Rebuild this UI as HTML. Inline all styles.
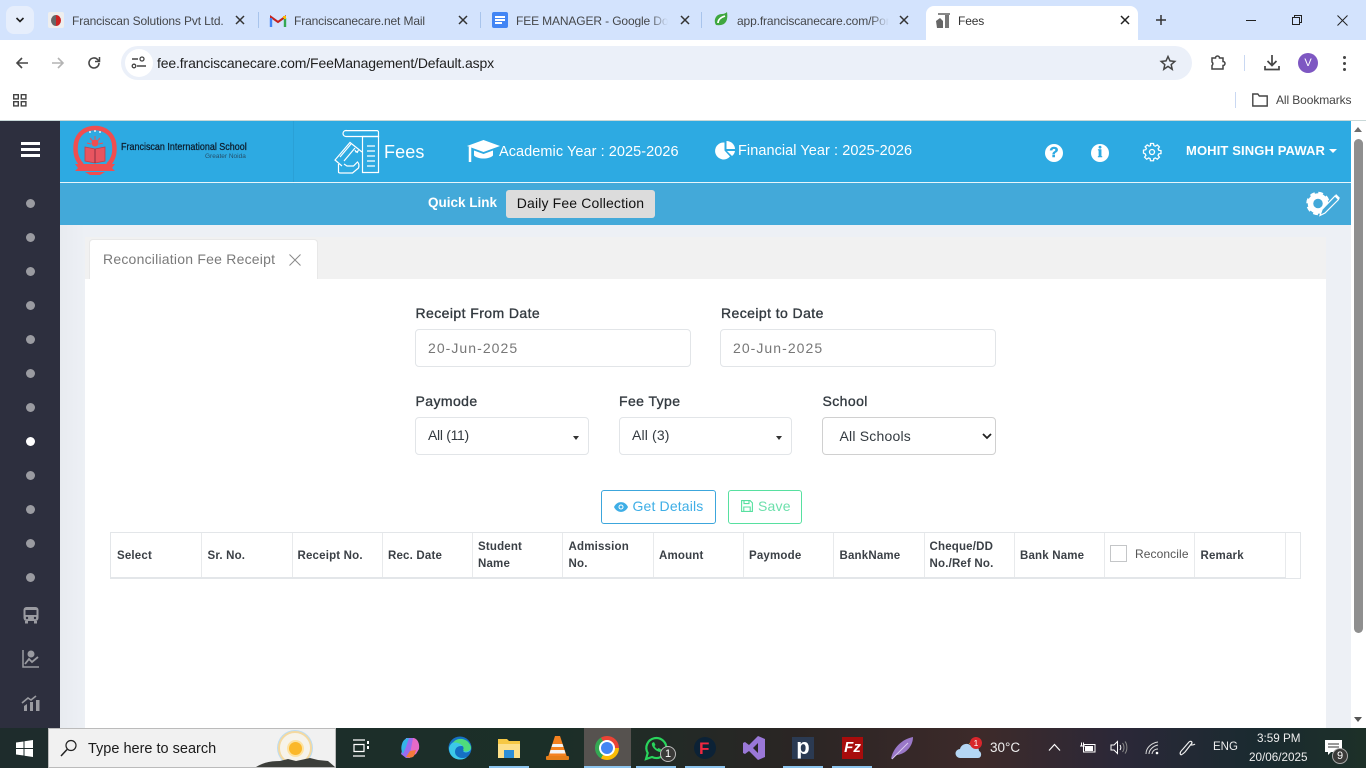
<!DOCTYPE html>
<html><head><meta charset="utf-8"><title>Fees</title>
<style>
html,body{margin:0;padding:0;width:1366px;height:768px;overflow:hidden;background:#fff}
body{position:relative;font-family:"Liberation Sans",sans-serif}
.a{position:absolute}
.t{position:absolute;white-space:nowrap;line-height:1}
.c{font-size:12px;color:#45474a;top:14.5px;letter-spacing:-.13px}
.fade{overflow:hidden;-webkit-mask-image:linear-gradient(90deg,#000 88%,transparent);mask-image:linear-gradient(90deg,#000 88%,transparent)}
.x{position:absolute;top:15px;width:10px;height:10px}
.lbl{position:absolute;white-space:nowrap;font-size:14px;font-weight:500;color:#333a40;-webkit-text-stroke:.35px #333a40;line-height:1;letter-spacing:.42px}
.in{position:absolute;box-sizing:border-box;border:1px solid #e2e5e8;border-radius:4px;background:#fff;height:38px;font-size:14px;line-height:36px;padding-left:12px;color:#777;letter-spacing:1.05px}
.th{position:absolute;font-size:11.5px;font-weight:bold;color:#3b4046;line-height:17px;white-space:nowrap;letter-spacing:.18px}
.dot{position:absolute;left:26px;width:9px;height:9px;border-radius:50%;background:#9a9ba1}
.tb{position:absolute;top:766px;height:2px;background:#8cc4ee}
.v{position:absolute;top:533px;width:1px;height:44px;background:#e8eaec}
svg{position:absolute;overflow:visible}
</style></head><body>

<!-- tab strip -->
<div class="a" style="left:0;top:0;width:1366px;height:40px;background:#d3e3fd"></div>
<div class="a" style="left:6px;top:6px;width:28px;height:28px;background:#e6eefc;border-radius:8px"></div>
<svg style="left:15px;top:17px" width="10" height="6"><path d="M1.500 1 L5 4.500 L8.500 1" stroke="#1f1f1f" stroke-width="1.600" fill="none"/></svg>
<div class="a" style="left:926px;top:6px;width:212px;height:34px;background:#fff;border-radius:8px 8px 0 0"></div>
<div class="a" style="left:258px;top:12px;width:1px;height:16px;background:#a8c4ec"></div>
<div class="a" style="left:480px;top:12px;width:1px;height:16px;background:#a8c4ec"></div>
<div class="a" style="left:701px;top:12px;width:1px;height:16px;background:#a8c4ec"></div>
<!-- favicons -->
<div class="a" style="left:48px;top:12px;width:16px;height:16px;background:#eee;border-radius:2px"></div>
<div class="a" style="left:51px;top:15px;width:10px;height:11px;border-radius:50%;background:linear-gradient(90deg,#666 50%,#c22 50%)"></div>
<svg style="left:270px;top:15px" width="16" height="12" viewBox="0 0 16 12"><path d="M1 12V2l7 5 7-5v10" fill="none" stroke="#c5221f" stroke-width="2"/><path d="M1 12V3" stroke="#4285f4" stroke-width="2.400"/><path d="M15 12V3" stroke="#34a853" stroke-width="2.400"/><path d="M13 2l2 0v2" stroke="#fbbc04" stroke-width="2" fill="none"/></svg>
<div class="a" style="left:492px;top:12px;width:16px;height:16px;background:#4285f4;border-radius:2px"></div>
<div class="a" style="left:495px;top:16px;width:10px;height:2px;background:#fff"></div>
<div class="a" style="left:495px;top:19px;width:10px;height:2px;background:#fff"></div>
<div class="a" style="left:495px;top:22px;width:7px;height:2px;background:#fff"></div>
<svg style="left:713px;top:12px" width="16" height="16" viewBox="0 0 16 16"><path d="M3 13C0 8 3 2 9 2c2 0 4-1 5-2 1 6 0 12-6 13-2 .3-3.500.2-5 0z" fill="#3fa73f"/><path d="M5 11C5 7 9 5 12 4" stroke="#fff" stroke-width="1.700" fill="none"/></svg>
<svg style="left:935px;top:12px" width="16" height="17" viewBox="0 0 16 17"><path d="M3 1h12v2H3z" fill="#888"/><path d="M10 3h4v13h-4z" fill="#777"/><path d="M1 9l4-3 3 3v7H2z" fill="#666"/></svg>
<!-- tab titles -->
<span class="t c" style="left:72px">Franciscan Solutions Pvt Ltd.</span>
<span class="t c" style="left:294px">Franciscanecare.net Mail</span>
<span class="t c fade" style="left:516px;width:152px">FEE MANAGER - Google Docs</span>
<span class="t c fade" style="left:737px;width:152px">app.franciscanecare.com/Portal</span>
<span class="t c" style="left:958px;color:#333">Fees</span>
<svg class="x" style="left:235px"><path d="M1 1l8 8M9 1l-8 8" stroke="#333" stroke-width="1.500"/></svg>
<svg class="x" style="left:458px"><path d="M1 1l8 8M9 1l-8 8" stroke="#333" stroke-width="1.500"/></svg>
<svg class="x" style="left:680px"><path d="M1 1l8 8M9 1l-8 8" stroke="#333" stroke-width="1.500"/></svg>
<svg class="x" style="left:899px"><path d="M1 1l8 8M9 1l-8 8" stroke="#333" stroke-width="1.500"/></svg>
<svg class="x" style="left:1120px"><path d="M1 1l8 8M9 1l-8 8" stroke="#222" stroke-width="1.500"/></svg>
<svg style="left:1155px;top:14px" width="12" height="12"><path d="M6 1v10M1 6h10" stroke="#333" stroke-width="1.500"/></svg>
<!-- window controls -->
<svg style="left:1246px;top:15px" width="11" height="10"><path d="M0 5.500h10" stroke="#222"/></svg>
<svg style="left:1291px;top:14px" width="12" height="12"><path d="M1.500 3.500h7v7h-7zM3.500 3.500v-2h7v7h-2" fill="none" stroke="#222"/></svg>
<svg style="left:1337px;top:15px" width="11" height="11"><path d="M.5.5l10 10M10.500.5l-10 10" stroke="#222"/></svg>

<!-- toolbar -->
<svg style="left:15px;top:56px" width="14" height="14"><path d="M13 7H2M7 2L2 7l5 5" fill="none" stroke="#474747" stroke-width="1.600"/></svg>
<svg style="left:51px;top:56px" width="14" height="14"><path d="M1 7h11M7 2l5 5-5 5" fill="none" stroke="#b4b4b4" stroke-width="1.600"/></svg>
<svg style="left:87px;top:56px" width="14" height="14"><path d="M12 7a5 5 0 1 1-1.500-3.600L12 5" fill="none" stroke="#474747" stroke-width="1.600"/><path d="M12.500 1v4.500H8" fill="none" stroke="#474747" stroke-width="1.500"/></svg>
<div class="a" style="left:121px;top:46px;width:1071px;height:34px;background:#ebf0f9;border-radius:17px"></div>
<div class="a" style="left:125px;top:49px;width:28px;height:28px;background:#fff;border-radius:50%"></div>
<svg style="left:131px;top:55px" width="16" height="16"><path d="M1 4h6M6 11h9" stroke="#444" stroke-width="1.400"/><circle cx="11" cy="4" r="2" fill="none" stroke="#444" stroke-width="1.300"/><circle cx="3" cy="11" r="1.800" fill="none" stroke="#444" stroke-width="1.300"/></svg>
<span class="t" style="left:157px;top:56px;font-size:14px;color:#1f1f1f;letter-spacing:-.14px">fee.franciscanecare.com/FeeManagement/Default.aspx</span>
<svg style="left:1160px;top:55px" width="16" height="16" viewBox="0 0 16 16"><path d="M8 1.500l2 4.400 4.800.5-3.600 3.200 1 4.700L8 11.400l-4.200 2.900 1-4.700L1.200 6.400l4.800-.5z" fill="none" stroke="#444" stroke-width="1.500"/></svg>
<svg style="left:1210px;top:54px" width="17" height="17" viewBox="0 0 17 17"><path d="M2 4h3.500a2 2 0 0 1 4 0H13v3.500a2 2 0 0 1 0 4V15H2v-3.500a2.200 2.200 0 0 0 0-3.500z" fill="none" stroke="#444" stroke-width="1.500"/></svg>
<div class="a" style="left:1244px;top:55px;width:1px;height:16px;background:#c9d8f2"></div>
<svg style="left:1264px;top:54px" width="16" height="17"><path d="M8 1v10M3.500 7L8 11.500 12.500 7M1 12v3.500h14V12" fill="none" stroke="#444" stroke-width="1.700"/></svg>
<div class="a" style="left:1298px;top:53px;width:20px;height:20px;border-radius:50%;background:#7e57c2;color:#fff;font-size:11px;line-height:20px;text-align:center">V</div>
<div class="a" style="left:1343px;top:56px;width:3px;height:3px;border-radius:50%;background:#444"></div>
<div class="a" style="left:1343px;top:62px;width:3px;height:3px;border-radius:50%;background:#444"></div>
<div class="a" style="left:1343px;top:68px;width:3px;height:3px;border-radius:50%;background:#444"></div>

<!-- bookmarks -->
<svg style="left:13px;top:94px" width="14" height="13" fill="none" stroke="#444" stroke-width="1.400"><rect x=".7" y=".7" width="4.600" height="4.200"/><rect x="8.300" y=".7" width="4.600" height="4.200"/><rect x=".7" y="7.700" width="4.600" height="4.200"/><rect x="8.300" y="7.700" width="4.600" height="4.200"/></svg>
<div class="a" style="left:1235px;top:92px;width:1px;height:16px;background:#c9d8f2"></div>
<svg style="left:1252px;top:93px" width="16" height="14"><path d="M.8 1h5l1.500 2h7.900v10H.8z" fill="none" stroke="#444" stroke-width="1.400"/></svg>
<span class="t" style="left:1276px;top:93.500px;font-size:12px;color:#444;letter-spacing:-.1px">All Bookmarks</span>
<div class="a" style="left:0;top:120px;width:1366px;height:1px;background:#c8d8d8"></div>

<!-- content bg -->
<div class="a" style="left:60px;top:225px;width:1291px;height:503px;background:linear-gradient(90deg,#e8ebf0,#edf0f5 25px)"></div>
<!-- header -->
<div class="a" style="left:60px;top:121px;width:1291px;height:61px;background:#2daae2"></div>
<div class="a" style="left:293px;top:121px;width:1px;height:61px;background:#2aa0d6"></div>
<div class="a" style="left:60px;top:182px;width:1291px;height:1px;background:#e8f5fb"></div>
<div class="a" style="left:60px;top:183px;width:1291px;height:42px;background:#43a9d9"></div>
<!-- sidebar -->
<div class="a" style="left:0;top:121px;width:60px;height:607px;background:#2d2f3e"></div>
<div class="a" style="left:21px;top:142px;width:19px;height:3px;background:#fff"></div>
<div class="a" style="left:21px;top:148px;width:19px;height:3px;background:#fff"></div>
<div class="a" style="left:21px;top:154px;width:19px;height:3px;background:#fff"></div>
<div class="dot" style="top:199px"></div><div class="dot" style="top:233px"></div><div class="dot" style="top:267px"></div><div class="dot" style="top:301px"></div><div class="dot" style="top:335px"></div><div class="dot" style="top:369px"></div><div class="dot" style="top:403px"></div><div class="dot" style="top:437px;background:#fff"></div><div class="dot" style="top:471px"></div><div class="dot" style="top:505px"></div><div class="dot" style="top:539px"></div><div class="dot" style="top:573px"></div>
<svg style="left:22px;top:606px" width="18" height="18" viewBox="0 0 18 18"><rect x="1.500" y="1" width="15" height="14" rx="3" fill="#9a9ba1"/><rect x="3.500" y="4" width="11" height="5" fill="#2d2f3e"/><circle cx="5" cy="12" r="1.200" fill="#2d2f3e"/><circle cx="13" cy="12" r="1.200" fill="#2d2f3e"/><rect x="3" y="15" width="3" height="2.500" fill="#9a9ba1"/><rect x="12" y="15" width="3" height="2.500" fill="#9a9ba1"/></svg>
<svg style="left:22px;top:650px" width="18" height="18" viewBox="0 0 18 18"><path d="M1 0v17h16" fill="none" stroke="#9a9ba1" stroke-width="1.500"/><path d="M3 14l4-5 3 3 6-5" fill="none" stroke="#9a9ba1" stroke-width="1.800"/><circle cx="9" cy="4" r="3.500" fill="#9a9ba1"/></svg>
<svg style="left:22px;top:695px" width="18" height="16" viewBox="0 0 18 16"><path d="M0 8L6 3l3 2 5-4" fill="none" stroke="#9a9ba1" stroke-width="1.600"/><path d="M2 16v-5l3-2v7zM8 16V7h3v9zM14 16V5h3.500v11z" fill="#9a9ba1"/></svg>

<!-- logo -->
<svg style="left:73px;top:126px" width="44" height="50" viewBox="0 0 44 50"><path d="M9 39 C2 32 2 24 3 17 C5 7 13 2 22 2 C31 2 39 7 41 17 C42 24 42 32 35 39" fill="none" stroke="#f04e50" stroke-width="4.500"/><path d="M2 38h40l-3 4 3 3H2l3-3z" fill="#f04e50"/><path d="M12 46h20l-5 3H17z" fill="#f04e50"/><path d="M12 21v14l10 2 10-2V21l-10 2z" fill="#e85560" stroke="#c83c44" stroke-width=".8"/><path d="M22 23v14" stroke="#8a3040"/><circle cx="22" cy="17" r="3.500" fill="#f04e50"/><path d="M14 17l4 1M30 17l-4 1M17 12l2.500 3M27 12l-2.500 3M22 10v3" stroke="#f04e50"/><path d="M16 6h2M21 5h2M26 6h2" stroke="#fff" stroke-width="1.200"/></svg>
<span class="t" style="left:121px;top:142px;font-size:10.500px;color:#0d1b2a;transform:scaleX(.855);transform-origin:0 0;-webkit-text-stroke:.25px #0d1b2a">Franciscan International School</span>
<span class="t" style="left:205px;top:154px;font-size:6.500px;color:#25506b">Greater Noida</span>
<!-- fees icon -->
<svg style="left:334px;top:130px" width="46" height="44" viewBox="0 0 46 44" fill="none" stroke="#fff" stroke-width="1.200"><path d="M12 .6h31a1.500 1.500 0 0 1 1.500 1.500V6.500H12a3 3 0 0 1 0-6z"/><path d="M28.500 6.500h16v36h-16z"/><path d="M33 16h8M33 21h8M33 26h8M33 31h8M33 36h8"/><path d="M28 22L16 12.500 1 30l7 6"/><path d="M6 27l11-13M10 31l11-13"/><path d="M4.500 34v8c0 1 1 1 2 1h12l6-5c1-3 0-5-1-6l-4 4H13l-3-2"/><path d="M21 20l1 2 2-1-1 2"/></svg>
<span class="t" style="left:384px;top:142.500px;font-size:18px;color:#fff;letter-spacing:.1px">Fees</span>
<!-- cap -->
<svg style="left:467px;top:140px" width="33" height="22" viewBox="0 0 33 22"><path d="M16.500 0L33 6 16.500 12 0 6z" fill="#fff"/><path d="M7 10.500v5c4 4 15 4 19 0v-5l-9.500 3.500z" fill="#fff"/><path d="M3 7v15" stroke="#fff" stroke-width="2.500"/></svg>
<span class="t" style="left:499px;top:145px;font-size:14.500px;color:#fff;letter-spacing:.06px">Academic Year : 2025-2026</span>
<svg style="left:716px;top:141px" width="19" height="19" viewBox="0 0 19 19"><path d="M8.500 1.500v8l5.500 6A8.500 8.500 0 1 1 8.500 1.500z" fill="#fff"/><path d="M10.500 0A8.500 8.500 0 0 1 19 8h-8.500z" fill="#fff"/><path d="M11 10h8a8 8 0 0 1-3 5z" fill="#fff"/></svg>
<span class="t" style="left:738px;top:144px;font-size:14.500px;color:#fff;letter-spacing:.06px">Financial Year : 2025-2026</span>
<!-- right icons -->
<div class="a" style="left:1045px;top:144px;width:18px;height:18px;border-radius:50%;background:#fff;color:#2daae2;font:bold 15px/18px 'Liberation Sans',sans-serif;text-align:center;-webkit-text-stroke:.5px #2daae2">?</div>
<div class="a" style="left:1091px;top:144px;width:18px;height:18px;border-radius:50%;background:#fff;color:#2daae2;font:bold 16px/18px 'Liberation Serif',serif;text-align:center;-webkit-text-stroke:.5px #2daae2">i</div>
<svg style="left:1143px;top:143px" width="18" height="18" viewBox="0 0 18 18" fill="none" stroke="#fff" stroke-width="1.300"><circle cx="9" cy="9" r="2.500"/><path d="M7.500 1h3l.4 2.200 1.500.6L14.300 2.500l2.100 2.100-1.300 1.900.6 1.500 2.300.5v3l-2.300.4-.6 1.500 1.300 1.900-2.100 2.100-1.900-1.300-1.500.6-.4 2.300h-3l-.4-2.300-1.500-.6-1.900 1.300-2.100-2.100 1.300-1.900-.6-1.500L.5 11V8l2.300-.5.600-1.500L2.100 4.600l2.100-2.100 1.900 1.300 1.500-.6z" transform="translate(0 -.5) scale(1 .96)"/></svg>
<span class="t" style="left:1186px;top:144px;font-size:13px;font-weight:bold;color:#fff;letter-spacing:.12px">MOHIT SINGH PAWAR</span>
<div class="a" style="left:1329px;top:149px;width:0;height:0;border-left:4px solid transparent;border-right:4px solid transparent;border-top:4px solid #fff"></div>

<!-- quick link -->
<span class="t" style="left:428px;top:196px;font-size:13.500px;font-weight:bold;color:#fff">Quick Link</span>
<div class="a" style="left:506px;top:190px;width:149px;height:28px;background:#dcdcdc;border-radius:3px;color:#111;font-size:14px;line-height:27px;text-align:center;letter-spacing:.15px">Daily Fee Collection</div>
<svg style="left:1306px;top:191px" width="36" height="26" viewBox="0 0 36 26"><circle cx="12" cy="12.500" r="7.500" fill="none" stroke="#fff" stroke-width="5.500"/><circle cx="12" cy="12.500" r="10" fill="none" stroke="#fff" stroke-width="3.500" stroke-dasharray="4.500 3.350"/><path d="M14 24.500l2-6L29 5l3.500 3.500L19 22z" fill="#43a9d9" stroke="#fff" stroke-width="1.200"/><path d="M30 3l4 4-1.500 1.500-3.500-3.500z" fill="#fff"/></svg>

<!-- scrollbar -->
<div class="a" style="left:1351px;top:121px;width:15px;height:607px;background:#fff"></div>
<div class="a" style="left:1354px;top:127px;width:0;height:0;border-left:4.500px solid transparent;border-right:4.500px solid transparent;border-bottom:5px solid #6e6e6e"></div>
<div class="a" style="left:1354px;top:139px;width:9px;height:494px;background:#8f8f8f;border-radius:5px"></div>
<div class="a" style="left:1354px;top:717px;width:0;height:0;border-left:4.500px solid transparent;border-right:4.500px solid transparent;border-top:5px solid #555"></div>

<!-- panel -->
<div class="a" style="left:85px;top:237px;width:1241px;height:42px;background:#f1f1f1"></div>
<div class="a" style="left:85px;top:279px;width:1241px;height:449px;background:#fff"></div>
<div class="a" style="left:89px;top:239px;width:229px;height:40px;box-sizing:border-box;background:#fff;border:1px solid #e8e8e8;border-bottom:0;border-radius:4px 4px 0 0"></div>
<span class="t" style="left:103px;top:252px;font-size:14px;color:#7a7a7a;letter-spacing:.22px">Reconciliation Fee Receipt</span>
<svg style="left:289px;top:254px" width="12" height="12"><path d="M.5.5l11 11M11.500.5l-11 11" stroke="#8a8a8a"/></svg>

<!-- form -->
<span class="lbl" style="left:415.500px;top:306px">Receipt From Date</span>
<span class="lbl" style="left:721px;top:306px">Receipt to Date</span>
<div class="in" style="left:415px;top:329px;width:276px">20-Jun-2025</div>
<div class="in" style="left:720px;top:329px;width:276px">20-Jun-2025</div>
<span class="lbl" style="left:415.500px;top:394px">Paymode</span>
<span class="lbl" style="left:619px;top:394px">Fee Type</span>
<span class="lbl" style="left:822.500px;top:394px">School</span>
<div class="in" style="left:415px;top:417px;width:174px;color:#333a40;letter-spacing:-.3px;line-height:35px">All (11)</div>
<div class="in" style="left:619px;top:417px;width:173px;color:#333a40;letter-spacing:.15px;line-height:35px">All (3)</div>
<div class="in" style="left:822px;top:417px;width:174px;color:#333a40;border-color:#d0d0d0;padding-left:16.500px;line-height:37px;letter-spacing:.2px">All Schools</div>
<div class="a" style="left:573px;top:436px;border-left:3.500px solid transparent;border-right:3.500px solid transparent;border-top:4px solid #333"></div>
<div class="a" style="left:776px;top:436px;border-left:3.500px solid transparent;border-right:3.500px solid transparent;border-top:4px solid #333"></div>
<svg style="left:982px;top:433px" width="10" height="7"><path d="M1 1l4 4 4-4" fill="none" stroke="#222" stroke-width="1.800"/></svg>

<!-- buttons -->
<div class="a" style="left:601px;top:490px;width:115px;height:34px;box-sizing:border-box;border:1px solid #3ca6dc;border-radius:3px"></div>
<svg style="left:614px;top:502px" width="14" height="10" viewBox="0 0 14 10"><path d="M0 5c3-6.500 11-6.500 14 0-3 6.500-11 6.500-14 0z" fill="#3eaee6"/><circle cx="7" cy="5" r="2.500" fill="#fff"/><circle cx="7" cy="5" r="1.500" fill="#3eaee6"/></svg>
<span class="t" style="left:632.500px;top:499px;font-size:14px;color:#3eaee6;letter-spacing:.15px">Get Details</span>
<div class="a" style="left:728px;top:490px;width:74px;height:34px;box-sizing:border-box;border:1px solid #57e0a0;border-radius:3px"></div>
<svg style="left:741px;top:500px" width="12" height="12" viewBox="0 0 12 12" fill="none" stroke="#57e0a0" stroke-width="1.100"><path d="M.6.6h8.500l2.300 2.300v8.500H.6z"/><path d="M3 .6v3h5v-3M2.800 11.400V7h6.400v4.400"/></svg>
<span class="t" style="left:758px;top:499px;font-size:14px;color:#6de0ac;letter-spacing:.2px">Save</span>

<!-- table -->
<div class="a" style="left:110px;top:532px;width:1191px;height:47px;box-sizing:border-box;border:1px solid #e3e6e9"></div>
<div class="a" style="left:111px;top:577px;width:1175px;height:2px;background:#e3e6e9"></div>
<div class="v" style="left:201px"></div><div class="v" style="left:292px"></div><div class="v" style="left:382px"></div><div class="v" style="left:472px"></div><div class="v" style="left:562px"></div><div class="v" style="left:653px"></div><div class="v" style="left:743px"></div><div class="v" style="left:833px"></div><div class="v" style="left:924px"></div><div class="v" style="left:1014px"></div><div class="v" style="left:1104px"></div><div class="v" style="left:1194px"></div><div class="v" style="left:1285px"></div>
<span class="th" style="left:117px;top:548px">Select</span>
<span class="th" style="left:207.500px;top:548px">Sr. No.</span>
<span class="th" style="left:297.500px;top:548px">Receipt No.</span>
<span class="th" style="left:388px;top:548px">Rec. Date</span>
<span class="th" style="left:478px;top:538.500px">Student<br>Name</span>
<span class="th" style="left:568.500px;top:538.500px">Admission<br>No.</span>
<span class="th" style="left:659px;top:548px">Amount</span>
<span class="th" style="left:749px;top:548px">Paymode</span>
<span class="th" style="left:839.500px;top:548px">BankName</span>
<span class="th" style="left:929.500px;top:538.500px">Cheque/DD<br>No./Ref No.</span>
<span class="th" style="left:1020px;top:548px">Bank Name</span>
<div class="a" style="left:1110px;top:545px;width:17px;height:17px;box-sizing:border-box;border:1px solid #c4c6c8;background:#fff"></div>
<span class="t" style="left:1135px;top:547.500px;font-size:12px;color:#555;letter-spacing:.1px">Reconcile</span>
<span class="th" style="left:1200.500px;top:548px">Remark</span>

<!-- taskbar -->
<div class="a" style="left:0;top:728px;width:1366px;height:40px;background:linear-gradient(90deg,#1e2c2c 0%,#1b2f28 40%,#2a2524 58%,#3d2a2a 72%,#2b2838 82%,#1a2a30 92%,#1d3028 100%)"></div>
<svg style="left:16px;top:740px" width="17" height="17"><path d="M0 2.500l7.500-1v6.500H0zM8.500 1.300L17 0v8H8.500zM0 9h7.500v6.500L0 14.500zM8.500 9H17v8l-8.500-1.300z" fill="#fff"/></svg>
<div class="a" style="left:48px;top:728px;width:288px;height:40px;box-sizing:border-box;background:#f1f1f1;border:1px solid #bbb"></div>
<svg style="left:60px;top:739px" width="17" height="18"><circle cx="11" cy="6.500" r="5" fill="none" stroke="#222" stroke-width="1.200"/><path d="M7 10.500L1 17" stroke="#222" stroke-width="1.500"/></svg>
<span class="t" style="left:88px;top:742px;font-size:14.500px;color:#1b1b1b">Type here to search</span>
<div class="a" style="left:278px;top:731px;width:34px;height:34px;border-radius:50%;box-sizing:border-box;border:2px solid #f4d9a0;box-shadow:0 0 0 1px #bcdcf2;background:#f6f3ea"></div>
<div class="a" style="left:289px;top:742px;width:13px;height:13px;border-radius:50%;background:#fbb829;box-shadow:0 0 0 2px #fde2a0"></div>
<svg style="left:256px;top:757px" width="80" height="10" viewBox="0 0 80 10"><path d="M0 10C8 5 16 4 24 4l8-2 8 2 14-3 8 2 10 1 7 6z" fill="#3c3e3a"/></svg>

<svg style="left:352px;top:739px" width="18" height="18" fill="none" stroke="#fff" stroke-width="1.200"><path d="M1 1h12M1 17h12M2 5.500h10v7H2z"/><path d="M16 2v3M16 7v3" stroke-width="2"/></svg>
<svg style="left:399px;top:737px" width="22" height="22" viewBox="0 0 22 22"><path d="M7 1h8l3 3-7 17H7L2 17z" fill="#9a6cf0"/><path d="M3 7c1-4 4-6 7-6l-3 9-3 7c-2-3-2-7-1-10z" fill="#36b4e8"/><path d="M14 1c4 0 7 5 6 11l-3 5-7 4 1-4z" fill="#e56ac8"/><path d="M7 20c4 1 6 1 8-1l2-6-6 1z" fill="#f47a3c"/></svg>
<svg style="left:448px;top:736px" width="24" height="24" viewBox="0 0 24 24"><circle cx="12" cy="12" r="11.500" fill="#1570c4"/><path d="M1 12C3 2 22 1 23 12c0 4-6 6-8 3 4 0 4-5-2-5-6 0-7 6-5 9 2 3 7 4 11 2-5 5-18 3-18-9z" fill="#3cc8e8"/><path d="M5 7c3-6 15-6 18 4 0 4-6 6-8 3 3-4-6-9-10-7z" fill="#4fdc7c"/></svg>
<svg style="left:497px;top:739px" width="24" height="19" viewBox="0 0 24 19"><path d="M1 0h9l2 2h11v17H1z" fill="#f6c844"/><rect x="1" y="5" width="22" height="14" fill="#fde08a"/><rect x="7" y="11" width="10" height="8" fill="#2d8fd8"/></svg>
<svg style="left:546px;top:736px" width="23" height="24" viewBox="0 0 23 24"><path d="M9 0h5l7 21H2z" fill="#f58220"/><path d="M6.500 8h10l1 3H5.500zM4.500 14h14l1 3.500h-16z" fill="#f4f4f4"/><rect x="0" y="20" width="23" height="4" rx="1" fill="#e67e18"/></svg>
<div class="a" style="left:584px;top:728px;width:47px;height:40px;background:#56524f"></div>
<div class="a" style="left:595px;top:736px;width:24px;height:24px;border-radius:50%;background:conic-gradient(from -30deg,#ea4335 0 120deg,#fbbc05 120deg 240deg,#34a853 240deg 360deg)"></div>
<div class="a" style="left:601px;top:742px;width:12px;height:12px;border-radius:50%;background:#4285f4;box-shadow:0 0 0 2px #fff"></div>
<svg style="left:644px;top:736px" width="24" height="25" viewBox="0 0 24 25"><path d="M2 23l1.700-6A10 10 0 1 1 8 21z" fill="none" stroke="#29d45c" stroke-width="2.200"/><path d="M8 7c-1 3 3 8 8 9l1.500-2.500-3-1.500-1 1c-1.500-.5-2.500-2-3-3l1-1-1.500-3z" fill="#29d45c"/></svg>
<div class="a" style="left:660px;top:746px;width:16px;height:16px;border-radius:50%;box-sizing:border-box;border:1px solid #bbb;background:#3a3a38;color:#fff;font-size:11px;line-height:15px;text-align:center">1</div>
<div class="a" style="left:694px;top:737px;width:22px;height:22px;border-radius:50%;background:#0c2236"></div>
<span class="t" style="left:699px;top:740px;font-size:17px;font-weight:bold;color:#f02840">F</span>
<svg style="left:743px;top:736px" width="22" height="24" viewBox="0 0 22 24"><path d="M15 0l7 3v18l-7 3L6 15l-4 3-2-1V7l2-1 4 3zM15 7l-5 5 5 5z" fill="#9a78d8" fill-rule="evenodd"/></svg>
<div class="a" style="left:792px;top:737px;width:22px;height:22px;background:#2b3a52;color:#fff;font:bold 22px/19px 'Liberation Sans',sans-serif;text-align:center">p</div>
<div class="a" style="left:842px;top:737px;width:21px;height:22px;background:#a80c0c;color:#fff;font:italic bold 15px/21px 'Liberation Sans',sans-serif;text-align:center">Fz</div>
<svg style="left:890px;top:736px" width="24" height="24" viewBox="0 0 24 24"><path d="M1 23C3 12 12 3 23 1c0 9-7 17-16 18z" fill="#9a78c8"/><path d="M2 23L18 7" stroke="#d8c8ee" stroke-width="1"/></svg>
<div class="tb" style="left:489px;width:40px"></div><div class="tb" style="left:584px;width:47px"></div><div class="tb" style="left:636px;width:40px"></div><div class="tb" style="left:685px;width:40px"></div><div class="tb" style="left:783px;width:40px"></div><div class="tb" style="left:832px;width:40px"></div>

<!-- tray -->
<svg style="left:957px;top:737px" width="28" height="22" viewBox="0 0 28 22"><path d="M3 21a4.500 4.500 0 0 1 0-9c1-5 8-7 11-3 4-1 8 1 8 5 3 1 3 7-1 7z" fill="#b4d6f4"/><path d="M12 7a6 6 0 0 1 11 1z" fill="#f3a03c"/></svg>
<div class="a" style="left:970px;top:737px;width:12px;height:12px;border-radius:50%;background:#d8262c;color:#fff;font-size:8.500px;line-height:12px;text-align:center">1</div>
<span class="t" style="left:990px;top:741px;font-size:13.500px;color:#eee">30°C</span>
<svg style="left:1048px;top:743px" width="13" height="9"><path d="M1 7.500L6.500 1.500l5.500 6" fill="none" stroke="#fff" stroke-width="1.200"/></svg>
<svg style="left:1079px;top:741px" width="17" height="13" fill="none" stroke="#fff"><rect x="4.500" y="3.500" width="11.500" height="7.500"/><rect x="6" y="5" width="8" height="5" fill="#fff" stroke="none"/><path d="M1 5h5M2.500 1.500v3M4.500 1.500v3"/></svg>
<svg style="left:1110px;top:740px" width="18" height="15" fill="none" stroke="#fff"><path d="M1 5h3l3.500-3.500v12L4 10H1z"/><path d="M10 5c1 1.500 1 3.500 0 5"/><path d="M12.500 3c2 2.500 2 6.500 0 9M15 1.500c2.500 3 2.500 9 0 12" stroke="#888"/></svg>
<svg style="left:1145px;top:741px" width="15" height="14" fill="none" stroke="#ddd"><path d="M1 13C1 7 6 2 13 1M4 13c0-4 4-8 9-9M7 13c0-2 2-5 6-5"/><circle cx="12" cy="12" r="1.300" fill="#fff" stroke="none"/></svg>
<svg style="left:1178px;top:739px" width="18" height="18" fill="none" stroke="#eee" stroke-width="1.200"><path d="M3 16c-2-2 0-4 2-6l6-7c1-1 3-1 3 1l-7 9M13 6c2 0 3 0 4-1M7 13c-1 1-2 2-4 3"/></svg>
<span class="t" style="left:1213px;top:742px;font-size:11.500px;color:#eee">ENG</span>
<span class="t" style="left:1257px;top:733px;font-size:11.700px;color:#eee">3:59 PM</span>
<span class="t" style="left:1249px;top:752px;font-size:11.700px;color:#eee">20/06/2025</span>
<svg style="left:1325px;top:740px" width="18" height="16"><path d="M0 0h17v12H6l-3 3v-3H0z" fill="#fff"/><path d="M3 4h11M3 7h11" stroke="#333"/></svg>
<div class="a" style="left:1332px;top:748px;width:16px;height:16px;border-radius:50%;box-sizing:border-box;border:1px solid #aaa;background:#3a3a38;color:#fff;font-size:11px;line-height:14px;text-align:center">9</div>

</body></html>
